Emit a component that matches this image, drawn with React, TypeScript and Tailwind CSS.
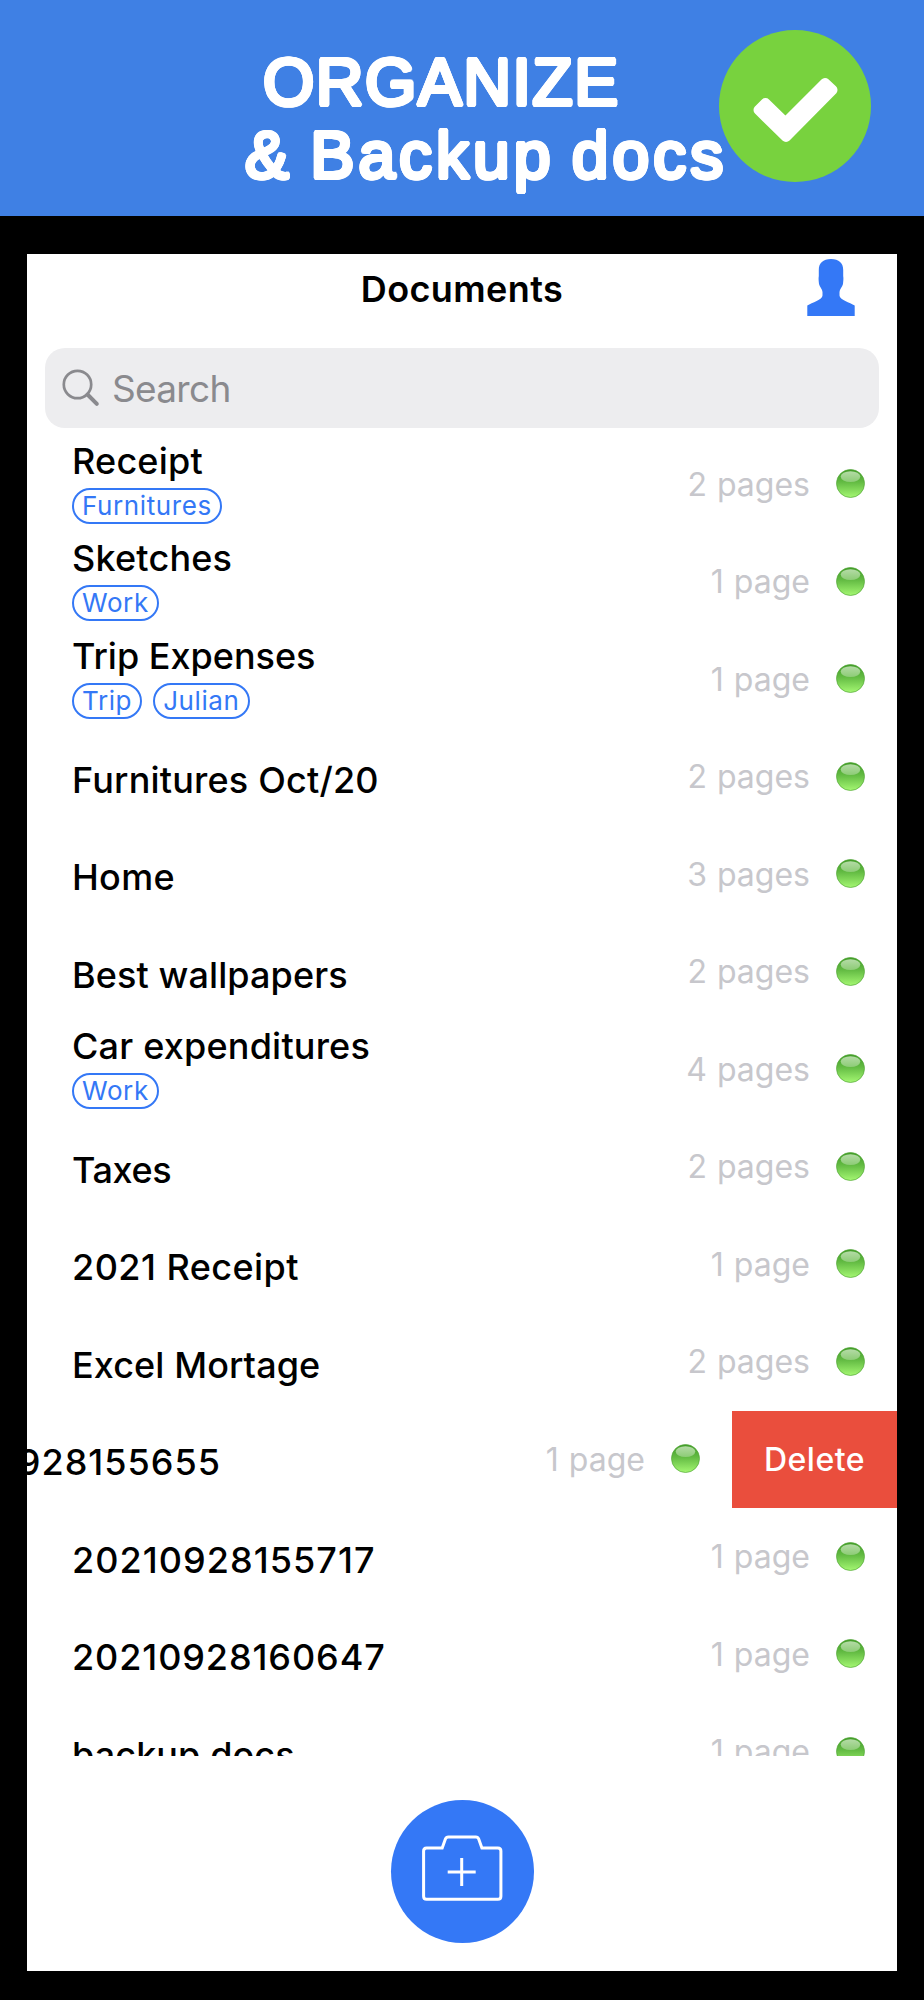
type Doc = {
  name: string;
  pages: number;
  tags?: string[];
  tracking?: string;
  swiped?: boolean;
};

const documents: Doc[] = [
  { name: "Receipt", pages: 2, tags: ["Furnitures"], tracking: "tracking-[0.2px]" },
  { name: "Sketches", pages: 1, tags: ["Work"], tracking: "tracking-[0.2px]" },
  { name: "Trip Expenses", pages: 1, tags: ["Trip", "Julian"] },
  { name: "Furnitures Oct/20", pages: 2, tracking: "tracking-[0.2px]" },
  { name: "Home", pages: 3, tracking: "tracking-[0.3px]" },
  { name: "Best wallpapers", pages: 2, tracking: "tracking-[0.1px]" },
  { name: "Car expenditures", pages: 4, tags: ["Work"], tracking: "tracking-[0.2px]" },
  { name: "Taxes", pages: 2, tracking: "tracking-[-0.4px]" },
  { name: "2021 Receipt", pages: 1, tracking: "tracking-[0.45px]" },
  { name: "Excel Mortage", pages: 2, tracking: "tracking-[0.1px]" },
  { name: "20210928155655", pages: 1, tracking: "tracking-[1px]", swiped: true },
  { name: "20210928155717", pages: 1, tracking: "tracking-[1.05px]" },
  { name: "20210928160647", pages: 1, tracking: "tracking-[0.9px]" },
  { name: "backup docs", pages: 1, tracking: "tracking-[0.1px]" },
];

const StatusDot = () => (
  <svg viewBox="0 0 29 29" className="w-[29px] h-[29px] -mt-[2px] shrink-0">
    <defs>
      <linearGradient id="dot" x1="0" y1="0" x2="0" y2="1">
        <stop offset="0" stopColor="#3f9a26" />
        <stop offset="0.45" stopColor="#63bb43" />
        <stop offset="1" stopColor="#a4f772" />
      </linearGradient>
      <linearGradient id="shine" x1="0" y1="0" x2="0" y2="1">
        <stop offset="0" stopColor="#b4dba6" />
        <stop offset="1" stopColor="#8dcc76" />
      </linearGradient>
    </defs>
    <circle cx="14.5" cy="14.5" r="14" fill="url(#dot)" stroke="#54a83a" strokeWidth="0.7" />
    <ellipse cx="14.5" cy="7.6" rx="9.8" ry="5.4" fill="url(#shine)" />
  </svg>
);

const Tag = ({ label }: { label: string }) => (
  <span className="h-9 px-2 rounded-full border-2 border-[#3478f6] text-[#3478f6] text-[26px] leading-8 tracking-[0.6px]">
    {label}
  </span>
);

const Row = ({ doc }: { doc: Doc }) => (
  <li className="h-[97.5px] flex justify-end">
    <div className="w-[870px] shrink-0 flex items-center pl-[45px] pr-8">
      <div className={`flex-1 self-stretch ${doc.tags ? "pt-[2.5px]" : "pt-[29px]"}`}>
        <div className={`text-[36px] leading-[44px] font-medium whitespace-nowrap ${doc.tracking ?? ""}`}>
          {doc.name}
        </div>
        {doc.tags && (
          <div className="flex gap-[11px] mt-[5px]">
            {doc.tags.map((tag) => (
              <Tag key={tag} label={tag} />
            ))}
          </div>
        )}
      </div>
      <span className="text-[32px] leading-[39px] -mt-px text-[#c7c7cc] mr-[26px] [word-spacing:1px]">
        {doc.pages} {doc.pages === 1 ? "page" : "pages"}
      </span>
      <StatusDot />
    </div>
    {doc.swiped && (
      <button className="w-[165px] h-[97px] shrink-0 bg-[#ea4e3d] text-white text-[32px] tracking-[0.5px] font-medium">
        Delete
      </button>
    )}
  </li>
);

const Banner = () => (
  <header className="h-[216px] bg-[#3f80e4] flex relative">
    {/* ring of hard shadows thickens the strokes and rounds their ends */}
    <h1 className="pl-[245px] pt-[46px] text-white text-[66px] leading-[72.5px] font-['Liberation_Sans'] whitespace-nowrap [text-shadow:2px_0_#fff,1.7px_1px_#fff,1px_1.7px_#fff,0_2px_#fff,-1px_1.7px_#fff,-1.7px_1px_#fff,-2px_0_#fff,-1.7px_-1px_#fff,-1px_-1.7px_#fff,0_-2px_#fff,1px_-1.7px_#fff,1.7px_-1px_#fff]">
      <span className="block pl-[18px] tracking-[1.5px]">ORGANIZE</span>
      <span className="block tracking-[4px] [word-spacing:-5px]">&amp; Backup docs</span>
    </h1>
    <svg viewBox="0 0 152 152" className="absolute left-[718.5px] top-[30px] w-[152px] h-[152px]">
      <circle cx="76" cy="76" r="76" fill="#78d23e" />
      <path
        d="M39.500 80 L46.500 73 L66.500 92.500 L106 53 L113.500 60 L67 107 Z"
        fill="#fff"
        stroke="#fff"
        strokeWidth="10"
        strokeLinejoin="round"
      />
    </svg>
  </header>
);

export default function App() {
  return (
    <div className="w-[924px] h-[2000px] overflow-hidden bg-black font-['Inter',sans-serif] text-black">
      <Banner />
      <main className="mx-[27px] mt-[38px] h-[1717px] bg-white flex flex-col overflow-hidden">
        <div className="h-[93.5px] shrink-0 relative flex justify-center pt-3">
          <h2 className="text-[36px] leading-[46px] font-semibold tracking-[0.4px]">Documents</h2>
          <svg viewBox="0 0 48 57" className="absolute left-[780px] top-[5px] w-12 h-[57px]" fill="#3478f6">
            <path d="M24 0 C16 0 11.800 4 11.800 11 V17 C11.300 20 11.800 22 12 25 C12.500 28 15.500 30 15.500 33 V36.500 C15.500 41 5 43.500 0.300 46.500 V57 H47.700 V46.500 C43 43.500 32.500 41 32.500 36.500 V33 C32.500 30 35.500 28 36 25 C36.200 22 36.700 20 36.200 17 V11 C36.200 4 32 0 24 0 Z" />
          </svg>
        </div>
        <div className="mx-[18px] h-20 shrink-0 rounded-[20px] bg-[#ededef] flex items-center pl-[17px] text-[#8a8a8e]">
          <svg viewBox="0 0 38 38" className="w-[38px] h-[38px]" fill="none" stroke="currentColor">
            <circle cx="15.500" cy="15.500" r="13.700" strokeWidth="2.700" />
            <path d="M25.500 25.500 L34.800 34.800" strokeWidth="4" strokeLinecap="round" />
          </svg>
          <span className="ml-3 mt-0.5 text-[37px] leading-[46px] tracking-[-0.7px]">Search</span>
        </div>
        <ul className="mt-[8.5px] h-[1320px] shrink-0 overflow-hidden">
          {documents.map((doc) => (
            <Row key={doc.name} doc={doc} />
          ))}
        </ul>
        <button className="mt-11 ml-[364px] w-[143px] h-[143px] shrink-0 rounded-full bg-[#3478f6]">
          <svg viewBox="0.600 0 143 143" fill="none" stroke="#fff" strokeWidth="3">
            <path d="M36.200 48 H51.800 L55 39 Q55.800 37 58 37 H85.500 Q87.500 37 88.300 39 L91.500 48 H107.500 Q110.500 48 110.500 51 V96.300 Q110.500 99.300 107.500 99.300 H36.200 Q33.200 99.300 33.200 96.300 V51 Q33.200 48 36.200 48 Z" />
            <path d="M71.300 58 V86 M57.300 72 H85.300" />
          </svg>
        </button>
      </main>
    </div>
  );
}
